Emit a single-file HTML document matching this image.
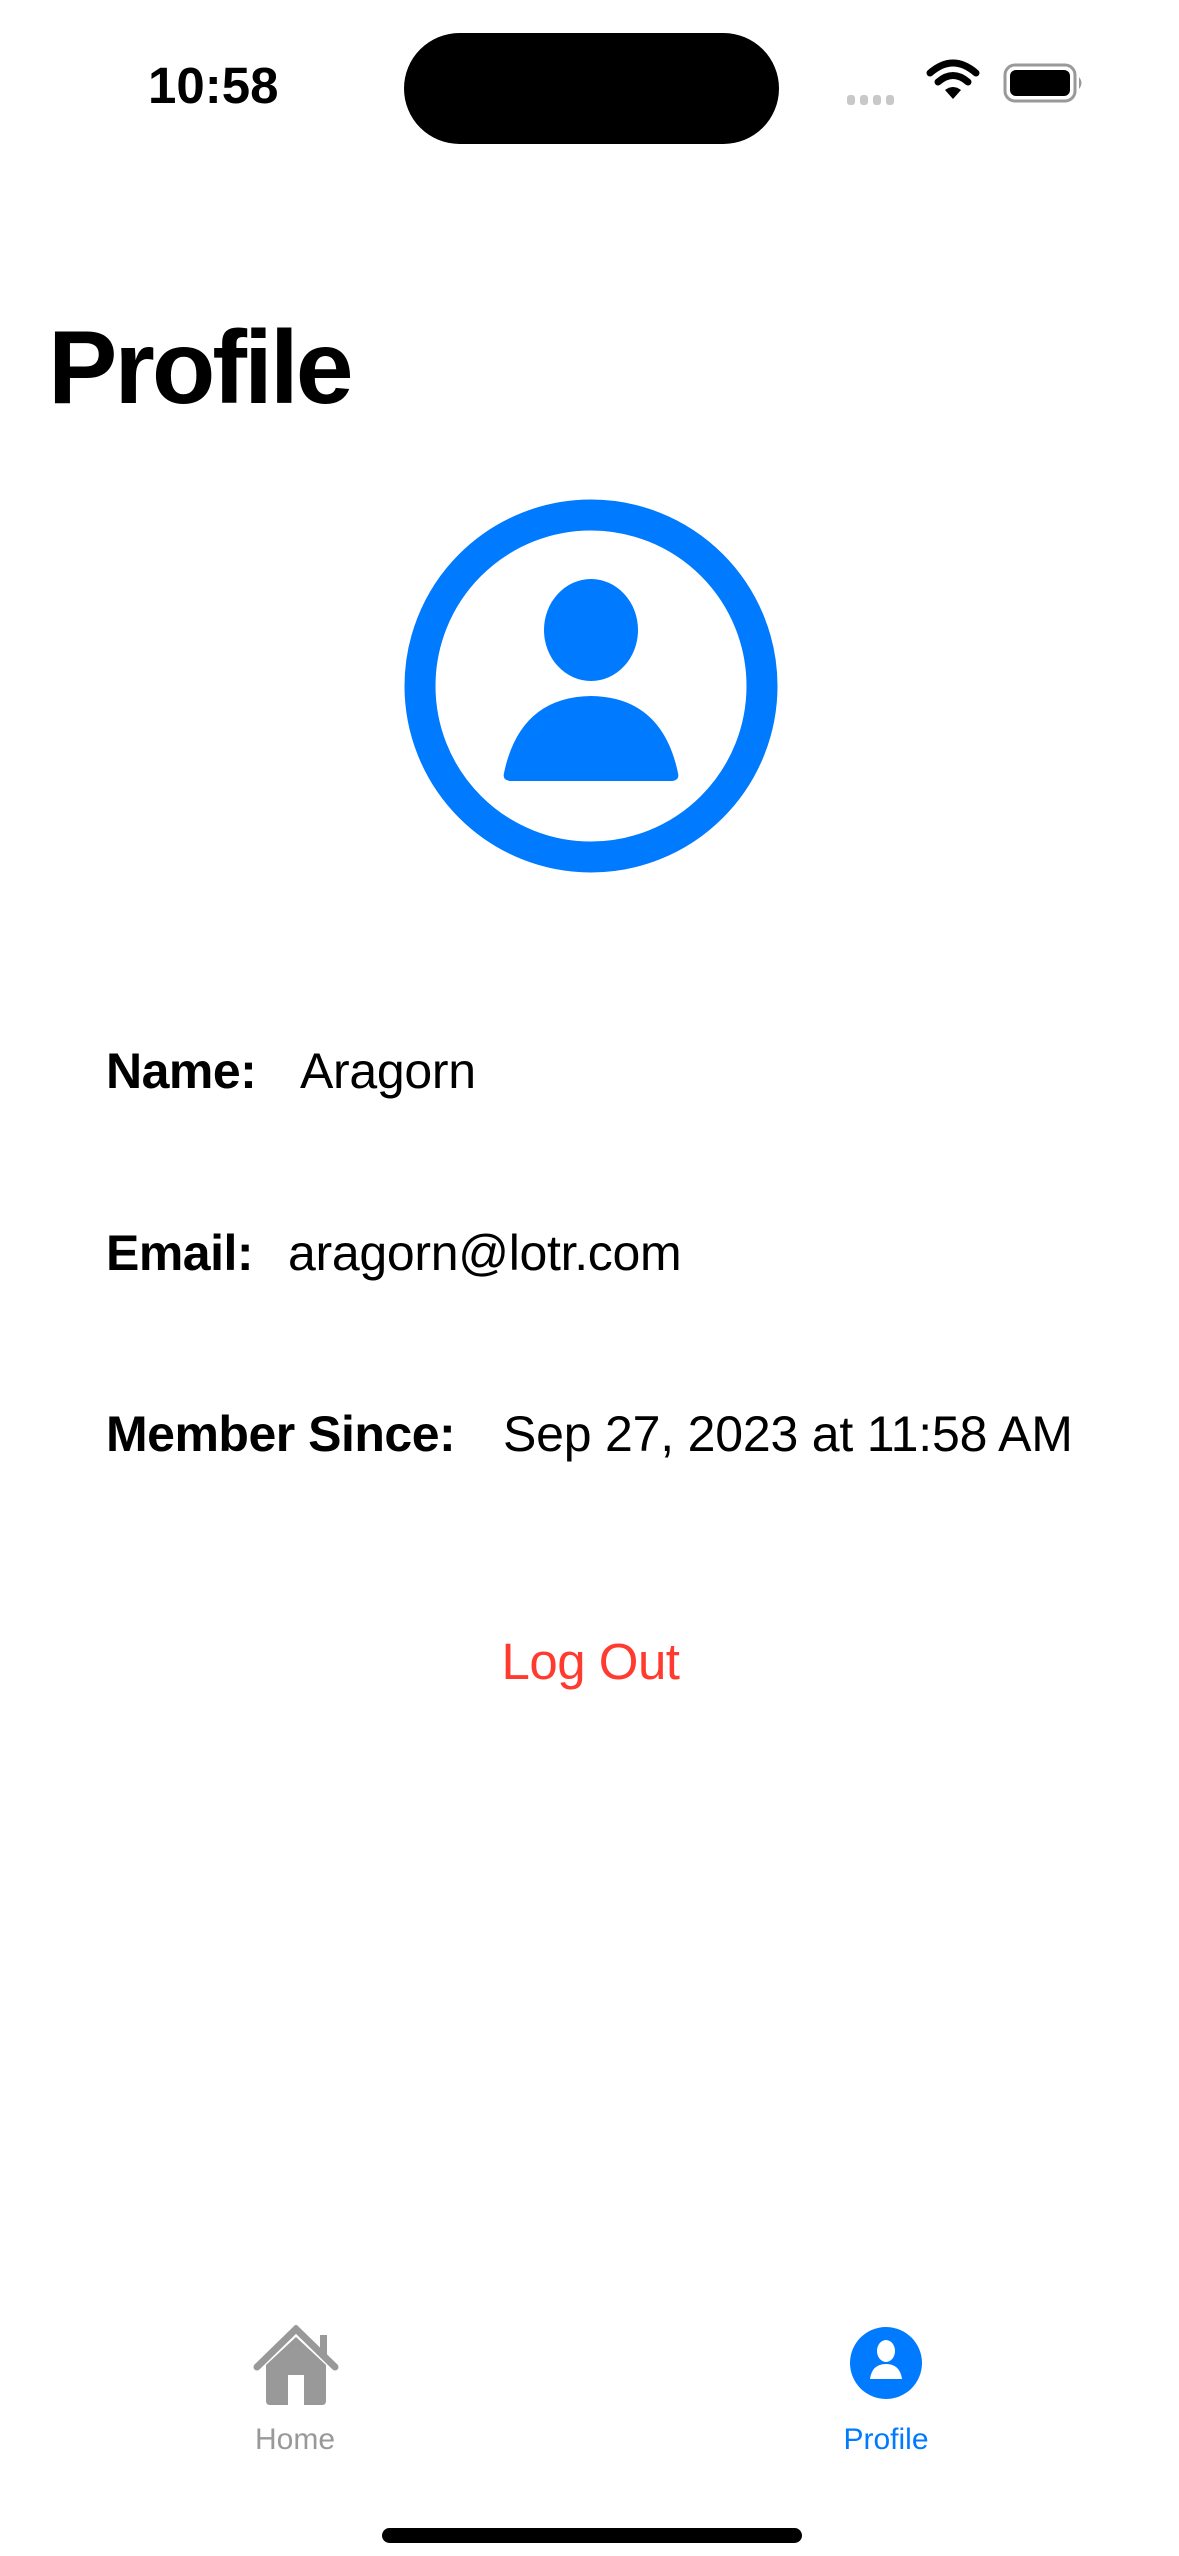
<!DOCTYPE html>
<html><head><meta charset="utf-8"><style>
body{margin:0;width:1179px;height:2556px;background:#fff;position:relative;overflow:hidden;font-family:"Liberation Sans",sans-serif;}
.a{position:absolute;white-space:nowrap;line-height:1;}
.lbl{font-weight:bold;font-size:50px;letter-spacing:-0.5px;color:#000;}
.val{font-size:50px;letter-spacing:-0.3px;color:#000;}
</style></head><body>
<div class="a" style="left:148px;top:60px;font-size:51px;font-weight:bold;letter-spacing:0px;">10:58</div>
<div class="a" style="left:404px;top:33px;width:375px;height:111px;border-radius:56px;background:#000;"></div>
<svg class="a" style="left:845px;top:55px" width="245" height="50" viewBox="0 0 245 50">
<g fill="#c8c8c8"><rect x="2" y="40" width="8" height="10" rx="3"/><rect x="15" y="40" width="8" height="10" rx="3"/><rect x="28" y="40" width="8" height="10" rx="3"/><rect x="41" y="40" width="8" height="10" rx="3"/></g>
<path d="M85 18 Q108 -2 131 18" stroke="#000" stroke-width="7" fill="none" stroke-linecap="round"/>
<path d="M93 27 Q108 14 123 27" stroke="#000" stroke-width="7" fill="none" stroke-linecap="round"/>
<path d="M100 35 L108 44 L116 35 Q108 29 100 35Z" fill="#000"/>
<rect x="160" y="10" width="70" height="36" rx="10" fill="none" stroke="#999" stroke-width="3"/>
<rect x="165" y="15" width="60" height="26" rx="6" fill="#000"/>
<path d="M234 22 Q239 28 234 34Z" fill="#999"/>
</svg>
<div class="a" style="left:48px;top:316px;font-size:104px;font-weight:bold;letter-spacing:-3px;">Profile</div>
<svg class="a" style="left:400px;top:495px" width="382" height="382" viewBox="0 0 382 382">
<circle cx="191" cy="191" r="171" fill="none" stroke="#007aff" stroke-width="31"/>
<ellipse cx="191" cy="135" rx="47" ry="51" fill="#007aff"/>
<path d="M104 278 Q120 202 191 201 Q262 202 278 278 Q280 286 270 286 L112 286 Q102 286 104 278Z" fill="#007aff"/>
</svg>
<div class="a lbl" style="left:106px;top:1046px;">Name:</div>
<div class="a val" style="left:300px;top:1046px;">Aragorn</div>
<div class="a lbl" style="left:106px;top:1228px;">Email:</div>
<div class="a val" style="left:288px;top:1228px;">aragorn@lotr.com</div>
<div class="a lbl" style="left:106px;top:1409px;">Member Since:</div>
<div class="a val" style="left:503px;top:1409px;letter-spacing:-0.2px">Sep 27, 2023 at 11:58 AM</div>
<div class="a" style="left:0;width:1181px;text-align:center;top:1636px;font-size:51px;color:#ff3b30;letter-spacing:-0.5px;">Log Out</div>
<svg class="a" style="left:253px;top:2325px" width="86" height="82" viewBox="0 0 86 82">
<path d="M4 42 L43 4 L82 42" stroke="#999" stroke-width="7" fill="none" stroke-linecap="round"/>
<rect x="67" y="10" width="7" height="22" fill="#999"/>
<path d="M13 40 L43 12 L73 40 L73 76 Q73 80 69 80 L17 80 Q13 80 13 76Z" fill="#999"/>
<rect x="35" y="50" width="16" height="30" fill="#fff"/>
</svg>
<div class="a" style="left:195px;width:200px;text-align:center;top:2425px;font-size:30px;color:#999;">Home</div>
<svg class="a" style="left:850px;top:2337px;transform:translateY(-10px)" width="72" height="72" viewBox="0 0 72 72">
<circle cx="36" cy="36" r="36" fill="#007aff"/>
<ellipse cx="36" cy="24" rx="9" ry="11" fill="#fff"/>
<path d="M20 52 Q22 37 36 37 Q50 37 52 52Z" fill="#fff"/>
</svg>
<div class="a" style="left:786px;width:200px;text-align:center;top:2425px;font-size:30px;color:#007aff;">Profile</div>
<div class="a" style="left:382px;top:2528px;width:420px;height:15px;border-radius:8px;background:#000;"></div>
</body></html>
